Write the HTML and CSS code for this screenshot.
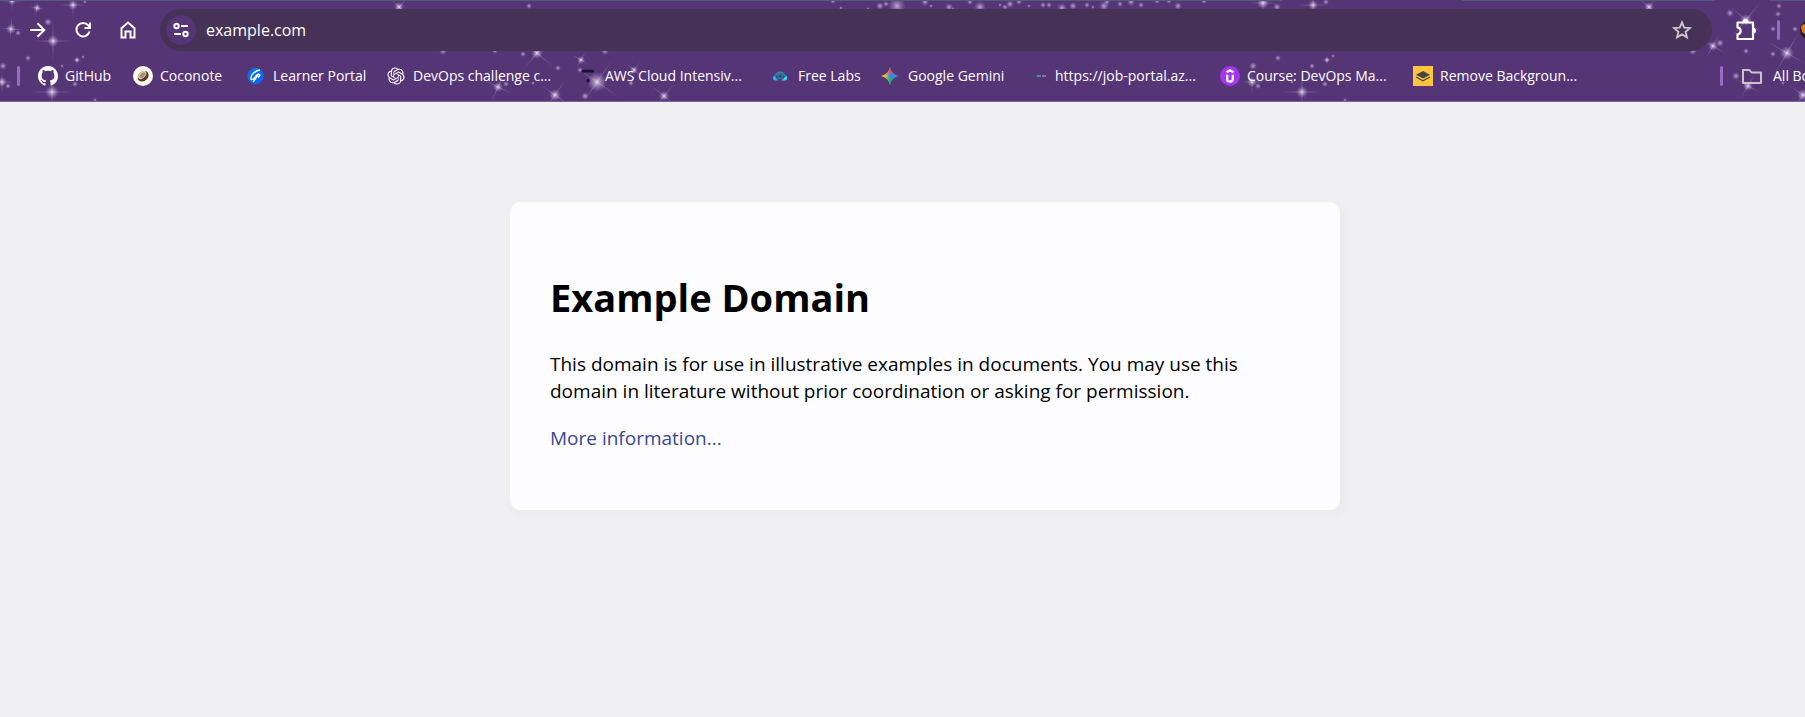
FILE: index.html
```html
<!DOCTYPE html>
<html lang="en">
<head>
<meta charset="utf-8">
<title>Example Domain</title>
<link rel="stylesheet" href="styles.css">
</head>
<body>
<header class="browser">
  <svg class="sky" id="sky" aria-hidden="true">
    <defs>
      <radialGradient id="glow">
        <stop offset="0" stop-color="#fff" stop-opacity=".95"/>
        <stop offset=".3" stop-color="#efe6fa" stop-opacity=".6"/>
        <stop offset="1" stop-color="#b79bd6" stop-opacity="0"/>
      </radialGradient>
    </defs>
  </svg>
  <div class="tabline"><span class="tabline-long"></span><span class="tabline-mid"></span><span class="tabline-end"></span></div>

  <div class="toolbar">
    <nav class="nav-buttons" aria-label="Navigation">
      <button class="icon-button" aria-label="Forward">
        <svg width="20" height="20" viewBox="0 0 20 20" fill="none" stroke="#fff" stroke-width="2"><path d="M2 10h14M9.5 3.2 16.3 10l-6.800 6.800"/></svg>
      </button>
      <button class="icon-button" aria-label="Reload">
        <svg width="20" height="20" viewBox="0 0 20 20" fill="none" stroke="#fff" stroke-width="2"><path d="M16.600 11.500A6.700 6.700 0 1 1 15.300 5.400L16.800 7.200"/><path d="M17 2.500v5.500h-5.500"/></svg>
      </button>
      <button class="icon-button" aria-label="Home">
        <svg width="20" height="20" viewBox="0 0 20 20" fill="none" stroke="#fff" stroke-width="2"><path d="M3.500 8.200 10 2.500l6.500 5.700v9.300h-4v-6h-5v6h-4z"/></svg>
      </button>
    </nav>
    <div class="omnibox">
      <button class="site-info" aria-label="View site information">
        <svg width="18" height="18" viewBox="0 0 18 18" fill="none" stroke="#fff" stroke-width="2"><circle cx="4.500" cy="5" r="2.200"/><path d="M9 5h7M2 13h7"/><circle cx="13.500" cy="13" r="2.200"/></svg>
      </button>
      <input class="address" type="text" value="example.com" aria-label="Address and search bar">
      <button class="icon-button" aria-label="Bookmark this tab">
        <svg width="20" height="20" viewBox="0 0 20 20" fill="none" stroke="#c9c5c8" stroke-width="1.900"><path d="m10 2.400 2.200 5.200 5.700.5-4.300 3.700 1.300 5.500-4.900-2.900-4.900 2.900 1.300-5.500-4.300-3.700 5.700-.5z"/></svg>
      </button>
    </div>
    <div class="extras">
      <button class="icon-button" aria-label="Extensions">
        <svg width="24" height="24" viewBox="0 0 24 24"><path d="M3.500 4.500h15.500v16.500H3.500v-4.600c4.200-.9 4.200-6.100 0-7z" fill="none" stroke="#fff" stroke-width="2.200" stroke-linejoin="round"/><path d="M8.500 4a3 3 0 0 1 6 0zM19 9.800a3 3 0 0 1 0 6z" fill="#fff"/></svg>
      </button>
      <span class="divider"></span>
      <button class="avatar" aria-label="Profile">
        <svg width="20" height="20" viewBox="0 0 20 20"><circle cx="10" cy="10" r="10" fill="#17231b"/><path d="M1 7c2-4 5-3 7-2v8c-2 1-5 0-6-1z" fill="#e5762c"/><path d="M2 13h8v4z" fill="#8d4a28"/></svg>
      </button>
    </div>
  </div>

  <div class="bookmarks">
    <span class="divider"></span>
    <nav class="bookmark-list" aria-label="Bookmarks">
      <a class="bookmark" href="#"><svg class="fav" viewBox="0 0 16 16" aria-hidden="true"><path fill="#fff" d="M8 0C3.580 0 0 3.580 0 8c0 3.540 2.290 6.530 5.470 7.590.4.070.55-.170.55-.380 0-.190-.010-.820-.010-1.490-2.010.370-2.530-.490-2.690-.940-.090-.230-.480-.940-.820-1.130-.280-.150-.680-.520-.010-.530.630-.010 1.080.580 1.230.820.720 1.210 1.870.870 2.330.660.070-.520.280-.870.510-1.070-1.780-.2-3.640-.890-3.640-3.950 0-.870.310-1.590.820-2.150-.080-.2-.360-1.020.080-2.120 0 0 .670-.210 2.200.820.640-.180 1.320-.270 2-.270.680 0 1.360.090 2 .270 1.530-1.040 2.200-.820 2.200-.820.440 1.100.160 1.920.080 2.120.510.560.820 1.270.820 2.150 0 3.070-1.870 3.750-3.650 3.950.290.250.540.730.540 1.480 0 1.070-.010 1.930-.010 2.200 0 .210.150.460.550.380A8.013 8.013 0 0 0 16 8c0-4.420-3.580-8-8-8z"/></svg>GitHub</a>
      <a class="bookmark" href="#"><svg class="fav" viewBox="0 0 20 20" aria-hidden="true"><circle cx="10" cy="10" r="10" fill="#fff8ec"/><ellipse cx="10" cy="10.300" rx="6" ry="4.700" transform="rotate(-42 10 10)" fill="#5a3a22"/><ellipse cx="9.200" cy="9" rx="4.800" ry="3" transform="rotate(-42 9.200 9)" fill="#e0d0bc"/><ellipse cx="9.400" cy="9.200" rx="3.600" ry="2" transform="rotate(-42 9.400 9.200)" fill="#a48d72"/></svg>Coconote</a>
      <a class="bookmark" href="#"><svg class="fav" viewBox="0 0 20 20" aria-hidden="true"><circle cx="9.500" cy="10" r="8.200" fill="#0a6cf0"/><path d="M13.500 4C9 4.500 4.500 9.500 4.800 12.500c.4 2.500 3.200.5 4.500-1.500M7.500 15.500 12.500 8M10 9.500c3.500-2.500 5-.5 2.500 1.500" fill="none" stroke="#fff" stroke-width="1.400" stroke-linecap="round"/></svg>Learner Portal</a>
      <a class="bookmark" href="#"><svg class="fav" viewBox="-2 -2 28 28" aria-hidden="true"><path fill="#fff" d="M22.2819 9.8211a5.9847 5.9847 0 0 0-.5157-4.9108 6.0462 6.0462 0 0 0-6.5098-2.9A6.0651 6.0651 0 0 0 4.9807 4.1818a5.9847 5.9847 0 0 0-3.9977 2.9 6.0462 6.0462 0 0 0 .7427 7.0966 5.98 5.98 0 0 0 .511 4.9107 6.051 6.051 0 0 0 6.5146 2.9001A5.9847 5.9847 0 0 0 13.2599 24a6.0557 6.0557 0 0 0 5.7718-4.2058 5.9894 5.9894 0 0 0 3.9977-2.9001 6.0557 6.0557 0 0 0-.7475-7.0729zm-9.022 12.6081a4.4755 4.4755 0 0 1-2.8764-1.0408l.1419-.0804 4.7783-2.7582a.7948.7948 0 0 0 .3927-.6813v-6.7369l2.02 1.1686a.071.071 0 0 1 .038.052v5.5826a4.504 4.504 0 0 1-4.4945 4.4944zm-9.6607-4.1254a4.4708 4.4708 0 0 1-.5346-3.0137l.142.0852 4.783 2.7582a.7712.7712 0 0 0 .7806 0l5.8428-3.3685v2.3324a.0804.0804 0 0 1-.0332.0615L9.74 19.9502a4.4992 4.4992 0 0 1-6.1408-1.6464zM2.3408 7.8956a4.485 4.485 0 0 1 2.3655-1.9728V11.6a.7664.7664 0 0 0 .3879.6765l5.8144 3.3543-2.0201 1.1685a.0757.0757 0 0 1-.071 0l-4.8303-2.7865A4.504 4.504 0 0 1 2.3408 7.872zm16.5963 3.8558L13.1038 8.364 15.1192 7.2a.0757.0757 0 0 1 .071 0l4.8303 2.7913a4.4944 4.4944 0 0 1-.6765 8.1042v-5.6772a.79.79 0 0 0-.407-.667zm2.0107-3.0231l-.142-.0852-4.7735-2.7818a.7759.7759 0 0 0-.7854 0L9.409 9.2297V6.8974a.0662.0662 0 0 1 .0284-.0615l4.8303-2.7866a4.4992 4.4992 0 0 1 6.6802 4.66zM8.3065 12.863l-2.02-1.1638a.0804.0804 0 0 1-.038-.0567V6.0742a4.4992 4.4992 0 0 1 7.3757-3.4537l-.142.0805L8.704 5.459a.7948.7948 0 0 0-.3927.6813zm1.0976-2.3654l2.602-1.4998 2.6069 1.4998v2.9994l-2.5974 1.4997-2.6067-1.4997Z"/></svg>DevOps challenge c...</a>
      <a class="bookmark" href="#"><svg class="fav" viewBox="0 0 20 20" aria-hidden="true"><path d="M5 5.200h9.500" stroke="#10182b" stroke-width="2.800" stroke-linecap="round"/><circle cx="10" cy="14.700" r="1.700" fill="#10182b"/></svg>AWS Cloud Intensiv...</a>
      <a class="bookmark" href="#"><svg class="fav" viewBox="0 0 20 20" aria-hidden="true"><path d="M4.500 13.800a2.700 2.700 0 0 1 .3-4.600 4.600 4.600 0 0 1 8.700 0 2.700 2.700 0 0 1 .3 4.600" fill="none" stroke="#2c8fae" stroke-width="1.300"/><path d="M3 10c2 1 2 2.500 4.500 4.400H4.500C1.800 14.400 1.300 11.500 3 10z" fill="#22b9ee"/><path d="M15.300 10c-2 1-2 2.500-4.800 4.400h3.200c2.700 0 3.300-2.900 1.600-4.400z" fill="#25e0f2"/><circle cx="9.200" cy="10.300" r="2.300" fill="none" stroke="#287e9e" stroke-width="1.300"/></svg>Free Labs</a>
      <a class="bookmark" href="#"><svg class="fav" viewBox="0 0 20 20" aria-hidden="true"><defs><clipPath id="spark"><path d="M9 1c1.200 5 3.500 7.500 9 9-5.500 1.500-7.800 4-9 9-1.200-5-3.500-7.500-9-9 5.500-1.500 7.800-4 9-9z"/></clipPath><linearGradient id="red" x2="0" y2="1"><stop offset=".3" stop-color="#f94543"/><stop offset="1" stop-color="#f94543" stop-opacity="0"/></linearGradient><linearGradient id="green" x2="0" y2="1"><stop offset="0" stop-color="#12b755" stop-opacity="0"/><stop offset=".7" stop-color="#12b755"/></linearGradient><linearGradient id="yellow"><stop offset=".4" stop-color="#ffc80a"/><stop offset="1" stop-color="#ffc80a" stop-opacity="0"/></linearGradient></defs><g clip-path="url(#spark)"><path fill="#3189ff" d="M0 0h20v20H0z"/><path fill="url(#red)" d="M0 1h20v9H0z"/><path fill="url(#green)" d="M0 9h20v10H0z"/><path fill="url(#yellow)" d="M0 0h9v20H0z"/></g></svg>Google Gemini</a>
      <a class="bookmark" href="#"><svg class="fav" viewBox="0 0 20 20" aria-hidden="true"><path d="M1 10h9" stroke="#35457d" stroke-width="2"/><path d="M9 10h10" stroke="#6f79ad" stroke-width="2" stroke-dasharray="4 1"/></svg>https://job-portal.az...</a>
      <a class="bookmark" href="#"><svg class="fav" viewBox="0 0 20 20" aria-hidden="true"><circle cx="10" cy="10" r="10" fill="#a435f0"/><path d="M6.500 6.200 10 4.200l3.500 2M7.200 8.800v4.500c0 3.200 5.600 3.200 5.600 0V8.800" fill="none" stroke="#fff" stroke-width="2.300"/></svg>Course: DevOps Ma...</a>
      <a class="bookmark" href="#"><svg class="fav" viewBox="0 0 20 20" aria-hidden="true"><path fill="#ffc43b" d="M0 0h20v20H0z"/><path d="m10 5 7 3.800-7 3.700-7-3.700z" fill="#454545"/><path d="m3 11 7 3.700 7-3.700" fill="none" stroke="#454545" stroke-width="1.300"/></svg>Remove Backgroun...</a>
    </nav>
    <div class="all-bookmarks">
      <span class="divider"></span>
      <a class="bookmark folder" href="#"><svg width="22" height="20" viewBox="0 0 22 20" fill="none" stroke="#c9c5c8" stroke-width="2" stroke-linejoin="round" aria-hidden="true"><path d="M2 4h6.500l2 2.500H20V17H2z"/></svg>All Bookmarks</a>
    </div>
  </div>
</header>

<main class="page">
  <article class="card">
    <h1>Example Domain</h1>
    <p>This domain is for use in illustrative examples in documents. You may use this domain in literature without prior coordination or asking for permission.</p>
    <p><a class="more" href="#">More information...</a></p>
  </article>
</main>
<script src="sky.js"></script>
</body>
</html>
```

FILE: styles.css
```css
* {
  box-sizing: border-box;
}

body {
  margin: 0;
  background: #f0f0f2;
  color: #000;
  font-family: "Open Sans", "Noto Sans", sans-serif;
  overflow-x: hidden;
}

button {
  padding: 0;
  border: 0;
  background: none;
  cursor: pointer;
}

svg {
  display: block;
  flex: none;
}

.browser {
  position: relative;
  overflow: hidden;
  background: #563577;
  border-bottom: 1px solid #7c6296;
}

.sky {
  position: absolute;
  inset: 0;
  width: 100%;
  height: 100%;
}

.tabline,
.toolbar,
.bookmarks {
  position: relative;
  display: flex;
  align-items: center;
}

.tabline {
  height: 1px;
}

.tabline span {
  height: 1px;
  background: #515c7c;
}

.tabline-long {
  width: 71%;
}

.tabline-mid {
  width: 14%;
  margin-left: 10%;
}

.tabline-end {
  flex: 1;
  margin-left: 3%;
}

.toolbar {
  height: 58px;
  padding-left: 28px;
}

.nav-buttons {
  display: flex;
  gap: 25px;
  margin-right: 22px;
}

.omnibox {
  display: flex;
  flex: 1;
  align-items: center;
  height: 42px;
  padding: 0 20px 0 6px;
  border-radius: 21px;
  background: #453256;
}

.site-info {
  display: grid;
  place-items: center;
  width: 30px;
  height: 30px;
  border-radius: 50%;
  background: #563577;
}

.address {
  flex: 1;
  min-width: 0;
  margin-left: 10px;
  padding: 0;
  border: 0;
  outline: 0;
  background: none;
  color: #fff;
  font: 16px "Open Sans", "Noto Sans", sans-serif;
}

.extras {
  display: flex;
  align-items: center;
  width: 93px;
  padding-left: 22px;
}

.extras .divider {
  margin: 0 20px 0 19px;
}

.divider {
  flex: none;
  width: 3px;
  height: 20px;
  border-radius: 2px;
  background: #9a69c6;
}

.bookmarks {
  height: 42px;
  padding: 0 0 9px 17px;
}

.bookmark-list {
  display: grid;
  flex: 1;
  grid-template-columns: 95px 113px 140px 192px 193px 110px 147px 192px 193px auto;
  margin-left: 18px;
}

.bookmark {
  display: flex;
  align-items: center;
  gap: 7px;
  color: #fff;
  font-size: 14px;
  line-height: 20px;
  text-decoration: none;
  white-space: nowrap;
}

.fav {
  width: 20px;
  height: 20px;
}

.all-bookmarks {
  display: flex;
  align-items: center;
  width: 85px;
}

.folder {
  gap: 10px;
  margin-left: 18px;
}

.page {
  padding: 100px 0 100px 45px;
}

.card {
  max-width: 830px;
  margin: 0 auto;
  padding: 42px 40px 38px;
  border-radius: 10px;
  background: #fdfdff;
  box-shadow: 3px 4px 10px 3px rgba(0, 0, 0, 0.02);
  font-size: 19px;
  line-height: 27px;
}

.card h1 {
  margin: 27px 0;
  font-size: 38px;
  line-height: 53px;
}

.card p {
  margin: 20px 0;
}

.more {
  color: #38488f;
  text-decoration: none;
}
```

FILE: sky.js
```js
// Theme artwork: [x, y, glow radius, ray length, ray angle]
const stars = [
  [12, 1, 4, 12, 0], [37, 8, 4, 9, 10], [73, 5, 5, 16, 0], [11, 29, 5, 14, 5], [18, 33, 3], [48, 22, 4], [53, 41, 6, 24, 0],
  [28, 58, 3], [77, 60, 3, 6, 0], [83, 57, 2], [62, 66, 2], [3, 66, 4], [2, 82, 5, 14, 0], [8, 86, 3], [75, 84, 3], [52, 92, 7, 26, 0],
  [95, 100, 2], [85, 2, 2],
  [399, 7, 5, 14, 45], [529, 6, 3], [443, 51, 4], [495, 51, 3], [523, 54, 3], [537, 53, 6, 24, 40], [605, 51, 4], [558, 68, 3],
  [581, 60, 4, 10, 30], [580, 70, 3], [498, 87, 5, 18, 25], [506, 84, 3], [533, 83, 2], [555, 95, 6, 20, 35], [585, 96, 4],
  [597, 82, 10, 30, 35], [634, 70, 4, 12, 40], [631, 83, 3], [664, 96, 5, 18, 40], [666, 76, 2],
  [833, 1, 3], [841, 8, 2], [868, 9, 2], [880, 6, 4], [886, 4, 3], [897, 6, 9], [925, 2, 4], [931, 6, 2], [949, 7, 4], [953, 9, 2],
  [970, 2, 3], [980, 7, 6], [1000, 5, 2], [1005, 7, 3], [1010, 4, 4], [1019, 2, 3], [1029, 6, 2], [1043, 5, 3], [1049, 5, 3],
  [1062, 8, 5], [1073, 6, 4], [1087, 5, 3], [1093, 7, 2], [1104, 6, 5], [1107, 2, 3], [1120, 4, 3], [1131, 2, 4], [1141, 5, 3],
  [1157, 1, 3], [1169, 1, 3], [1178, 6, 4], [1204, 1, 3],
  [1263, 3, 6, 16, 0], [1277, 7, 4], [1313, 5, 5, 18, 0], [1326, 2, 3], [1278, 58, 3], [1253, 66, 4], [1252, 82, 5, 14, 0],
  [1258, 86, 3], [1312, 66, 3], [1327, 60, 3, 6, 0], [1333, 56, 2], [1325, 84, 3], [1302, 92, 6, 26, 0], [1345, 100, 2], [1292, 82, 2],
  [1649, 7, 5, 16, 40], [1730, 13, 4], [1746, 20, 6, 24, 40], [1779, 6, 3], [1778, 14, 3], [1773, 29, 3], [1795, 29, 3],
  [1713, 46, 5, 16, 30], [1720, 43, 4], [1693, 51, 4], [1746, 51, 3], [1773, 54, 3], [1787, 53, 7, 26, 30], [1736, 76, 4],
  [1748, 86, 5, 16, 30], [1783, 83, 2], [1803, 95, 6, 20, 35]
];

const ns = "http://www.w3.org/2000/svg";
const sky = document.getElementById("sky");

function glow(parent, rx, ry, opacity) {
  const e = document.createElementNS(ns, "ellipse");
  e.setAttribute("rx", rx);
  e.setAttribute("ry", ry);
  e.setAttribute("fill", "url(#glow)");
  e.setAttribute("opacity", opacity);
  parent.appendChild(e);
}

for (const [x, y, r, ray = 0, angle = 0] of stars) {
  const g = document.createElementNS(ns, "g");
  g.setAttribute("transform", `translate(${x} ${y}) rotate(${angle})`);
  glow(g, r, r, ray ? 0.85 : 0.65);
  if (ray) {
    glow(g, ray, 1, 0.35);
    glow(g, 1, ray, 0.35);
  }
  sky.appendChild(g);
}
```
